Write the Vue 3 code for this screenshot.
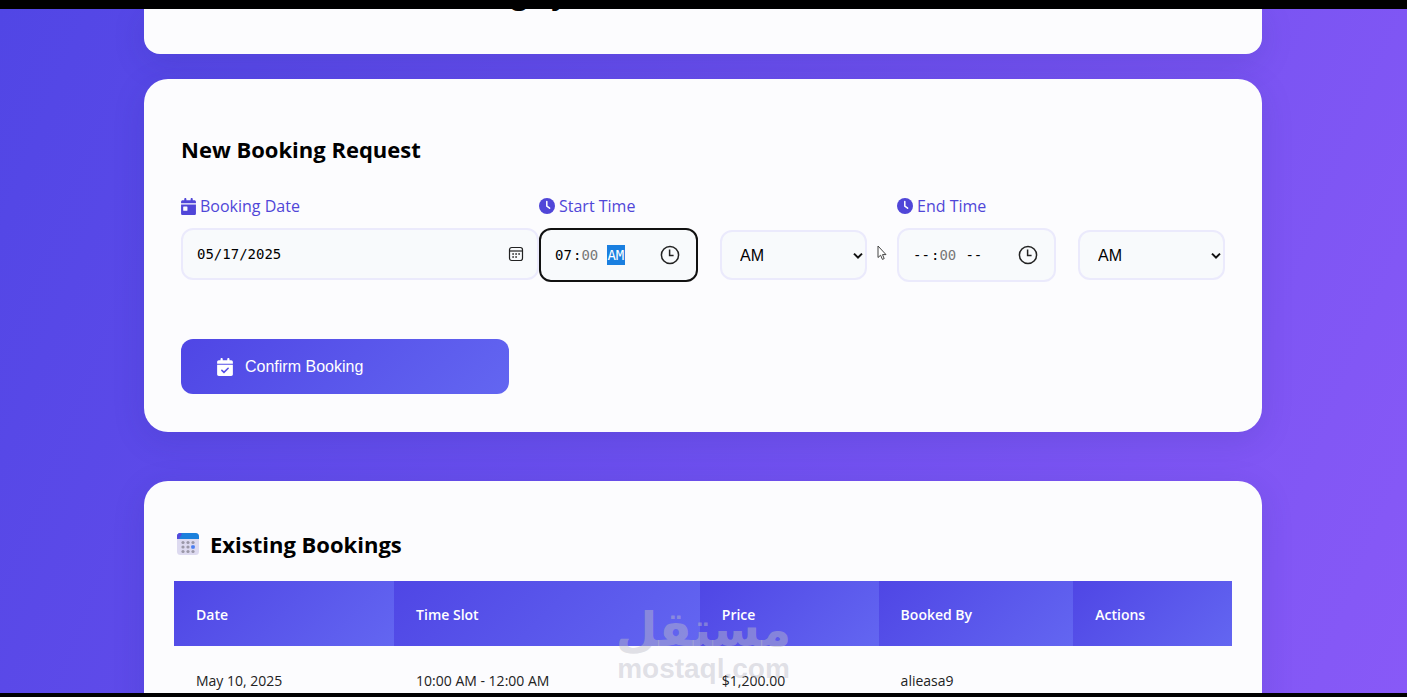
<script setup>
import { ref } from 'vue'

const date = ref('05/17/2025')
const fields = ref([
  { id: 'start', label: 'Start Time', hour: '07', minute: '00', half: 'AM', period: 'AM', active: true },
  { id: 'end', label: 'End Time', hour: '--', minute: '00', half: '--', period: 'AM', active: false }
])
const columns = ['Date', 'Time Slot', 'Price', 'Booked By', 'Actions']
const bookings = [
  { date: 'May 10, 2025', slot: '10:00 AM - 12:00 AM', price: '$1,200.00', by: 'alieasa9' }
]
</script>

<template>
  <div class="screen">
    <main class="page">
      <header class="card hero"><h1>Booking System</h1></header>

      <section class="card booking">
        <h2>New Booking Request</h2>
        <form @submit.prevent>
          <div class="fields">
            <div class="group">
              <label class="caption" for="date">
                <svg width="15" height="17" viewBox="0 0 448 512" aria-hidden="true"><path fill="currentColor" d="M128 0c18 0 32 14 32 32v32h128V32c0-18 14-32 32-32s32 14 32 32v32h48c27 0 48 21 48 48v48H0v-48c0-27 21-48 48-48h48V32c0-18 14-32 32-32zM0 192h448v272c0 27-21 48-48 48H48c-27 0-48-21-48-48V192zm80 64c-9 0-16 7-16 16v96c0 9 7 16 16 16h96c9 0 16-7 16-16v-96c0-9-7-16-16-16H80z" /></svg>
                Booking Date
              </label>
              <div class="box date-box">
                <input id="date" v-model="date" class="mono date" type="text" />
                <button class="picker" type="button" aria-label="Open calendar">
                  <svg width="16" height="16" viewBox="0 0 16 16" fill="none" stroke="currentColor" aria-hidden="true"><rect x="1.5" y="1.5" width="13" height="13" rx="2.2" stroke-width="1.2" /><path d="M1.5 5h13" stroke-width="1.2" /><path d="M7.3 8h1.6M10.3 8h1.6M4.3 8h1.6M4.3 11h1.6M7.3 11h1.6" stroke-width="1.6" /></svg>
                </button>
              </div>
            </div>

            <div v-for="f in fields" :key="f.id" class="group">
              <label class="caption" :for="f.id">
                <svg width="16" height="16" viewBox="0 0 16 16" aria-hidden="true"><circle cx="8" cy="8" r="8" fill="currentColor" /><path d="M7.8 3.5V8.2L10.6 10.2" fill="none" stroke="#fff" stroke-width="1.5" stroke-linecap="round" /></svg>
                {{ f.label }}
              </label>
              <div class="pair">
                <div class="box time-box" :class="{ active: f.active }">
                  <input :id="f.id" v-model="f.hour" class="mono part" type="text" />
                  <span class="mono">:</span>
                  <input v-model="f.minute" class="mono part muted" type="text" :aria-label="f.label + ' minutes'" />
                  <input v-model="f.half" class="mono part half" :class="{ selected: f.active }" type="text" :aria-label="f.label + ' half of day'" />
                  <button class="picker" type="button" :aria-label="'Pick ' + f.label">
                    <svg width="20" height="20" viewBox="0 0 20 20" fill="none" stroke="currentColor" stroke-width="1.5" aria-hidden="true"><circle cx="10" cy="10" r="8.6" /><path d="M9.6 4.6V10.4H13.6" /></svg>
                  </button>
                </div>
                <div class="select-box">
                  <select v-model="f.period" :aria-label="f.label + ' period'">
                    <option>AM</option>
                    <option>PM</option>
                  </select>
                  <svg class="chevron" width="10" height="8" viewBox="0 0 10 8" fill="none" stroke="#111" stroke-width="2" aria-hidden="true"><path d="M1 1.6L5 5.6L9 1.6" /></svg>
                </div>
                <svg v-if="f.active" class="cursor" width="10" height="16" viewBox="0 0 10 16" fill="#fff" stroke="#444" aria-hidden="true"><path d="M1 1V12.5L3.6 10.2L5.4 14.4L7.2 13.6L5.5 9.6H9Z" /></svg>
              </div>
            </div>
          </div>

          <button class="confirm" type="submit">
            <svg width="16" height="18" viewBox="0 0 448 512" aria-hidden="true"><path fill="currentColor" d="M128 0c18 0 32 14 32 32v32h128V32c0-18 14-32 32-32s32 14 32 32v32h48c27 0 48 21 48 48v48H0v-48c0-27 21-48 48-48h48V32c0-18 14-32 32-32zM0 192h448v272c0 27-21 48-48 48H48c-27 0-48-21-48-48V192z" /><path d="M135 350l60 58l118-116" fill="none" stroke="#544de8" stroke-width="46" stroke-linecap="round" /></svg>
            Confirm Booking
          </button>
        </form>
      </section>

      <section class="card existing">
        <h2>
          <svg width="24" height="24" viewBox="0 0 24 24" aria-hidden="true"><rect x="1" y="1" width="22" height="22" rx="3.5" fill="#dddaf0" /><path d="M1 7V4.5A3.5 3.5 0 0 1 4.5 1h15A3.5 3.5 0 0 1 23 4.5V7Z" fill="#1b80dc" /><path d="M1 7V4.5A3.5 3.5 0 0 1 4.5 1L6 2L3 7Z" fill="#5548dd" /><g fill="#9b98a8"><circle cx="7" cy="10.5" r="1.6" /><circle cx="12" cy="10.5" r="1.6" /><circle cx="17" cy="10.5" r="1.6" /><circle cx="7" cy="15" r="1.6" /><circle cx="12" cy="15" r="1.6" /><circle cx="7" cy="19.5" r="1.6" /><circle cx="12" cy="19.5" r="1.6" /><circle cx="17" cy="19.5" r="1.6" /></g><rect x="15.2" y="13.2" width="3.6" height="3.6" rx="1" fill="#4a7df0" /></svg>
          Existing Bookings
        </h2>
        <table>
          <colgroup><col class="c1" /><col class="c2" /><col class="c3" /><col class="c4" /><col class="c5" /></colgroup>
          <thead><tr><th v-for="c in columns" :key="c" scope="col">{{ c }}</th></tr></thead>
          <tbody>
            <tr v-for="b in bookings" :key="b.date"><td>{{ b.date }}</td><td>{{ b.slot }}</td><td>{{ b.price }}</td><td>{{ b.by }}</td><td></td></tr>
          </tbody>
        </table>
      </section>
    </main>
    <div class="watermark"><span class="arabic" lang="ar" dir="rtl">مستقل</span><span class="latin">mostaql.com</span></div>
  </div>
</template>

<style>
body { margin: 0; background: #000; }
</style>

<style scoped>
* { box-sizing: border-box; }
.screen { position: relative; height: 100vh; padding: 9px 0 4px; background: #000; font-family: "Segoe UI", "Open Sans", "Noto Sans", sans-serif; color: #000; }
.page { height: 100%; overflow: hidden; padding: 0 145px 0 144px; background: linear-gradient(112deg, #5146e5, #8859f7); }
.card { background: #fcfcfe; box-shadow: 0 8px 32px rgba(31, 38, 135, 0.15); border-radius: 24px; }
.hero { height: 45px; margin-bottom: 25px; padding-left: 266px; border-radius: 0 0 16px 16px; overflow: hidden; }
h1 { margin: -36px 0 0; font-size: 29px; line-height: 40px; }
.booking { padding: 53px 37px 38px; margin-bottom: 49px; }
h2 { display: flex; align-items: center; gap: 10px; margin: 0; font-size: 22px; line-height: 34px; font-weight: 700; }
.fields { display: grid; grid-template-columns: repeat(3, 1fr); column-gap: 30px; margin-top: 28px; }
.group { min-width: 0; }
.caption { display: flex; align-items: center; gap: 4px; height: 24px; margin-bottom: 10px; color: #5046d8; font-size: 16px; font-weight: 500; }
.box { display: flex; align-items: center; border: 2px solid #ebeafc; border-radius: 12px; background: #f8fafc; }
.date-box { height: 52px; width: calc(100% + 30px); padding: 0 13px 0 14px; }
.pair { position: relative; display: grid; grid-template-columns: 159fr 147fr; align-items: center; column-gap: 22px; }
.time-box { height: 54px; padding: 0 16px 0 14px; }
.active { border-color: #111; }
.mono { font-family: Consolas, "DejaVu Sans Mono", monospace; font-size: 14px; line-height: 20px; color: #000; }
input { border: 0; padding: 0; margin: 0; background: transparent; outline: 0; }
.date { flex: 1; min-width: 0; }
.part { width: 18px; flex: none; }
.muted { color: #777; }
.half { margin-left: 8px; }
.selected { background: #1a7fe0; color: #fff; }
.picker { display: flex; margin: 0 0 0 auto; padding: 0; border: 0; background: none; color: #222; }
.select-box { position: relative; }
select { display: block; width: 100%; height: 50px; padding: 0 18px; appearance: none; border: 2px solid #ebeafc; border-radius: 12px; background: #f8fafc; font-family: "Liberation Sans", Arial, sans-serif; font-size: 16px; color: #000; }
.chevron { position: absolute; right: 4px; top: 22px; }
.cursor { position: absolute; right: -20px; top: 17px; }
.confirm { display: flex; align-items: center; gap: 12px; width: 328px; height: 55px; margin-top: 57px; padding: 0 36px; border: 0; border-radius: 12px; background: linear-gradient(135deg, #4f46e5, #6366f1); color: #fff; font-family: "Liberation Sans", Arial, sans-serif; font-size: 16px; }
.existing { padding: 46px 30px; }
.existing h2 { padding-left: 2px; margin-bottom: 20px; }
table { width: 100%; border-collapse: collapse; table-layout: fixed; font-size: 14px; }
.c1 { width: 20.8%; }
.c2 { width: 28.9%; }
.c3 { width: 16.9%; }
.c4 { width: 18.4%; }
.c5 { width: 15%; }
th { height: 65px; padding: 2px 22px 0; background: linear-gradient(135deg, #4f46e5, #6366f1); color: #fff; font-weight: 600; text-align: left; }
td { height: 68px; padding: 0 22px; color: #222; }
.watermark { position: absolute; left: 50%; bottom: 12px; display: flex; flex-direction: column; align-items: center; width: 180px; margin-left: -90px; color: rgba(190, 190, 200, 0.45); font-weight: 700; pointer-events: none; }
.arabic { font-family: "DejaVu Sans", sans-serif; font-size: 48px; line-height: 48px; }
.latin { font-family: "Liberation Sans", sans-serif; font-size: 28px; line-height: 32px; }
</style>
